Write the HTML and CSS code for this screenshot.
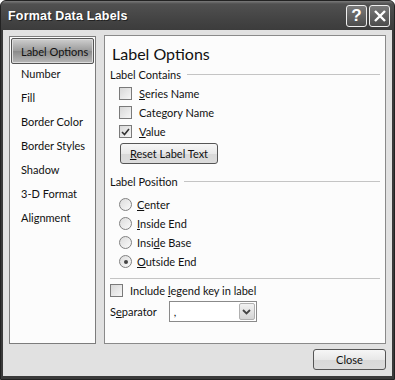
FILE: index.html
```html
<!doctype html>
<html>
<head>
    <title>Format Data Labels</title>
    <meta charset="utf-8" />
    <link rel="stylesheet" href="styles.css">
</head>
<body>
<div class="window">
    <div class="titlebar">
        <span class="title">Format Data Labels</span>
        <div class="capbuttons">
            <span class="capbtn">?</span>
            <span class="capbtn">
                <svg width="14" height="14" viewBox="0 0 14 14"><path d="M2 2 L12 12 M12 2 L2 12" stroke="#fff" stroke-width="2.4" fill="none"/></svg>
            </span>
        </div>
    </div>

    <div class="client">
        <div class="main">
            <ul class="nav">
                <li class="selected">Label Options</li>
                <li>Number</li>
                <li>Fill</li>
                <li>Border Color</li>
                <li>Border Styles</li>
                <li>Shadow</li>
                <li>3-D Format</li>
                <li>Alignment</li>
            </ul>

            <div class="panel">
                <h2>Label Options</h2>

                <div class="group-title"><span>Label Contains</span><i></i></div>
                <div class="options">
                    <label class="row"><span class="check"></span><span><u>S</u>eries Name</span></label>
                    <label class="row"><span class="check"></span><span>Cate<u>g</u>ory Name</span></label>
                    <label class="row"><span class="check checked">
                        <svg width="9" height="8" viewBox="0 0 9 8"><path d="M1 4 L3.5 6.5 L8 1" stroke="#333" stroke-width="1.6" fill="none"/></svg>
                    </span><span><u>V</u>alue</span></label>
                    <button class="btn reset"><u>R</u>eset Label Text</button>
                </div>

                <div class="group-title"><span>Label Position</span><i></i></div>
                <div class="options radios">
                    <label class="row"><span class="radio"></span><span><u>C</u>enter</span></label>
                    <label class="row"><span class="radio"></span><span><u>I</u>nside End</span></label>
                    <label class="row"><span class="radio"></span><span>Insi<u>d</u>e Base</span></label>
                    <label class="row"><span class="radio on"></span><span><u>O</u>utside End</span></label>
                </div>

                <hr class="rule">

                <label class="row legend"><span class="check"></span><span>Include <u>l</u>egend key in label</span></label>

                <div class="sep-row">
                    <span>S<u>e</u>parator</span>
                    <div class="combo">
                        <span class="value">,</span>
                        <span class="drop">
                            <svg width="9" height="6" viewBox="0 0 9 6"><path d="M1 1 L4.5 4.5 L8 1" stroke="#444" stroke-width="1.8" fill="none"/></svg>
                        </span>
                    </div>
                </div>
            </div>
        </div>

        <div class="footer">
            <button class="btn close">Close</button>
        </div>
    </div>
</div>
</body>
</html>
```

FILE: styles.css
```css
body {
	margin:0;
	padding:0;
	background:#ffffff;
	font-family:Lato, "Noto Sans", sans-serif;
	font-size:11px;
	color:#111;
}

.window {
	width:395px;
	height:380px;
	box-sizing:border-box;
	background:#3a3a3a;
	border:1px solid #222;
	border-radius:6px 6px 0 0;
	display:flex;
	flex-direction:column;
	overflow:hidden;
}

.titlebar {
	height:29px;
	display:flex;
	align-items:center;
	justify-content:space-between;
	padding:0 4px 0 7px;
	background:linear-gradient(to bottom, #7a7a7a 0, #505050 3px, #444 60%, #3c3c3c 100%);
}

.title {
	font-family:"Liberation Sans", Arial, sans-serif;
	font-weight:bold;
	font-size:12.5px;
	color:#fff;
	letter-spacing:0.2px;
	text-shadow:1px 1px 0 #222;
}

.capbuttons {
	display:flex;
	gap:2px;
	margin-top:1px;
}

.capbtn {
	width:19px;
	height:20px;
	border:1px solid #eee;
	border-radius:3px;
	background:linear-gradient(to bottom, #7a7a7a, #4c4c4c);
	color:#fff;
	font-family:"Liberation Sans", Arial, sans-serif;
	font-weight:bold;
	font-size:17px;
	display:flex;
	align-items:center;
	justify-content:center;
}

.client {
	flex:1;
	margin:0 2px 3px 2px;
	background:#e1e1e1;
	padding:5px 6px 0 6px;
	display:flex;
	flex-direction:column;
}

.main {
	display:flex;
	gap:8px;
	height:309px;
}

.nav {
	list-style:none;
	margin:1px 0 0 0;
	padding:1px;
	width:83px;
	background:#fcfcfc;
	border:1px solid #7c7c7c;
}

.nav li {
	height:24px;
	line-height:24px;
	padding-left:10px;
	white-space:nowrap;
}

.nav li.selected {
	height:26px;
	line-height:26px;
	margin-bottom:-2px;
	border:1px solid #555;
	border-radius:2px;
	padding-left:9px;
	box-sizing:border-box;
	background:linear-gradient(to bottom, #cfcfcf 0, #9a9a9a 50%, #8a8a8a 51%, #b8b8b8 100%);
	box-shadow:inset 0 0 0 1px #ddd;
}

.panel {
	flex:1;
	background:#fcfcfc;
	border:1px solid #8a8a8a;
	padding:0 5px 0 5px;
}

.panel h2 {
	margin:6px 0 0 2px;
	font-weight:normal;
	font-size:16px;
	line-height:24px;
	color:#111;
}

.group-title {
	display:flex;
	align-items:center;
	gap:6px;
	height:16px;
}

.group-title i {
	flex:1;
	border-top:1px solid #c4c4c4;
	margin-top:1px;
}

.options {
	padding:2px 0 0 9px;
}

.row {
	display:flex;
	align-items:center;
	gap:7px;
	height:19px;
}

.check {
	width:11px;
	height:11px;
	border:1px solid #7a7a7a;
	background:linear-gradient(135deg, #d8d8d8, #f6f6f6);
	display:flex;
	align-items:center;
	justify-content:center;
}

.btn {
	font-family:Lato, "Noto Sans", sans-serif;
	font-size:11px;
	color:#111;
	border:1px solid #555;
	border-radius:3px;
	background:linear-gradient(to bottom, #f6f6f6 0, #e8e8e8 50%, #d8d8d8 51%, #dcdcdc 100%);
	padding:0;
}

.reset {
	margin:2px 0 9px 1px;
	width:98px;
	height:21px;
}

.radios .row {
	gap:5px;
}

.radios {
	padding-top:6px;
}

.radio {
	width:11px;
	height:11px;
	border:1px solid #808080;
	border-radius:50%;
	background:linear-gradient(135deg, #dcdcdc, #fafafa);
	display:flex;
	align-items:center;
	justify-content:center;
}

.radio.on::after {
	content:"";
	width:4px;
	height:4px;
	border-radius:50%;
	background:#444;
}

.rule {
	border:0;
	border-top:1px solid #c4c4c4;
	margin:7px 0 0 0;
}

.legend {
	height:22px;
}

.sep-row {
	display:flex;
	align-items:center;
	gap:12px;
	margin-top:0;
}

.combo {
	width:86px;
	height:19px;
	border:1px solid #8a8a8a;
	background:#fff;
	display:flex;
	justify-content:space-between;
	align-items:center;
}

.combo .value {
	padding-left:4px;
}

.drop {
	width:16px;
	height:17px;
	margin-right:1px;
	border:1px solid #b0b0b0;
	border-radius:2px;
	box-sizing:border-box;
	background:linear-gradient(to bottom, #f2f2f2, #d4d4d4);
	display:flex;
	align-items:center;
	justify-content:center;
}

.footer {
	display:flex;
	justify-content:flex-end;
	padding-top:5px;
}

.close {
	width:73px;
	height:21px;
	margin-right:0;
}
```
